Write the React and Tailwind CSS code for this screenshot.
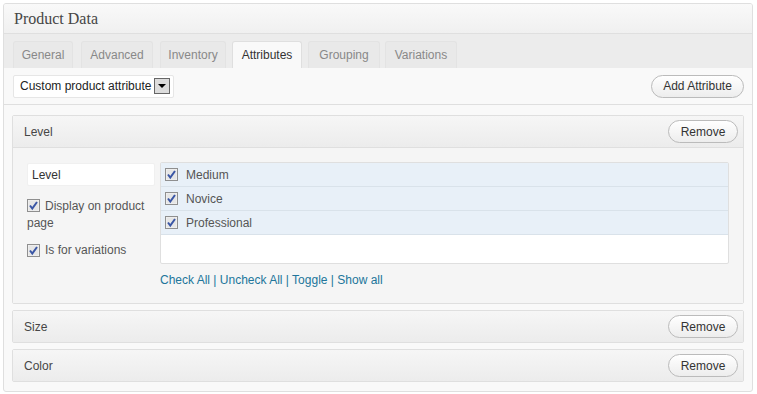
import React from "react";

// [label, width, left gap] measured from the tab strip
const tabs = [
  ["General", "w-[60px]", "ml-0"],
  ["Advanced", "w-[72px]", "ml-[8px]"],
  ["Inventory", "w-[66px]", "ml-[7px]"],
  ["Attributes", "w-[70px]", "ml-[6px]"],
  ["Grouping", "w-[72px]", "ml-[6px]"],
  ["Variations", "w-[72px]", "ml-[5px]"],
];
const terms = ["Medium", "Novice", "Professional"];

function Check({ className = "" }) {
  return (
    <svg width="13" height="13" viewBox="0 0 13 13" aria-hidden="true" className={"shrink-0 " + className}>
      <rect x="0.5" y="0.5" width="12" height="12" fill="#f4f4f4" stroke="#8f8f8f" />
      <rect x="1.5" y="1.5" width="10" height="10" fill="#e6e6e6" />
      <path d="M3 6.5 L5.3 9.5 L10 3" fill="none" stroke="#3a56a5" strokeWidth="2" />
    </svg>
  );
}

function PillButton({ children, className = "" }) {
  return (
    <button
      type="button"
      className={
        "h-[23px] rounded-full border border-[#bbb] bg-gradient-to-b from-white to-[#ededed] px-[11px] text-[12px] text-[#333] " +
        className
      }
    >
      {children}
    </button>
  );
}

function PanelHeader({ title }) {
  return (
    <div className="flex h-[31px] items-center justify-between bg-gradient-to-b from-[#f6f6f6] to-[#ececec] pl-[11px] pr-[5px]">
      <span className="text-[12px] text-[#464646]">{title}</span>
      <PillButton className="w-[70px]">Remove</PillButton>
    </div>
  );
}

export default function App() {
  return (
    <div className="min-h-screen bg-white p-[3px] font-['Liberation_Sans',Arial,sans-serif]">
      <div className="w-[750px] overflow-hidden rounded-[3px] border border-[#dfdfdf] bg-[#f9f9f9]">
        <div className="flex h-[30px] items-center border-b border-[#dfdfdf] bg-gradient-to-b from-[#f9f9f9] to-[#f0f0f0] px-[10px] font-['Liberation_Serif',Georgia,serif] text-[16px] text-[#464646]">
          Product Data
        </div>

        <div className="flex h-[34px] items-end bg-[#ececec] pl-[9px]">
          {tabs.map(([t, w, ml]) => (
            <div
              key={t}
              className={
                "flex h-[27px] items-center justify-center rounded-t-[3px] border border-b-0 text-[12px] " +
                w +
                " " +
                ml +
                " " +
                (t === "Attributes"
                  ? "border-[#dfdfdf] bg-[#f9f9f9] text-[#333]"
                  : "border-[#e3e3e3] bg-[#e9e9e9] text-[#888]")
              }
            >
              {t}
            </div>
          ))}
        </div>

        <div className="flex h-[37px] items-center justify-between border-b border-[#dfdfdf] pl-[9px] pr-[8px]">
          <div className="flex h-[23px] w-[161px] items-center justify-between rounded-[2px] border border-[#e6e6e6] bg-white pl-[6px] pr-[3px] text-[12px] text-[#222]">
            <span className="whitespace-nowrap">Custom product attribute</span>
            <span className="flex h-[16px] w-[16px] shrink-0 items-center justify-center border border-[#666] bg-[#dcdcdc]">
              <span className="h-0 w-0 border-x-[4px] border-t-[4px] border-x-transparent border-t-black" />
            </span>
          </div>
          <PillButton className="w-[93px]">Add Attribute</PillButton>
        </div>

        <div className="flex flex-col gap-[6px] px-[8px] pb-[9px] pt-[10px]">
          <div className="rounded-[2px] border border-[#dfdfdf]">
            <div className="border-b border-[#dfdfdf]">
              <PanelHeader title="Level" />
            </div>
            <div className="bg-[#f5f5f5] px-[14px] pb-[14px] pt-[15px]">
              <div className="flex gap-[5px]">
                <div className="w-[128px] text-[12px] text-[#555]">
                  <div className="flex h-[23px] items-center rounded-[2px] border border-[#f0f0f0] bg-white px-[4px] text-[#333]">
                    Level
                  </div>
                  <div className="mt-[12px] leading-[17px]">
                    <Check className="mr-[5px] inline-block align-[-2px]" />
                    Display on product page
                  </div>
                  <div className="mt-[9px] flex items-center gap-[5px]">
                    <Check />
                    <span>Is for variations</span>
                  </div>
                </div>
                <div className="flex-1">
                  <div className="mt-[-1px] h-[102px] rounded-[2px] border border-[#dfdfdf] bg-white">
                    {terms.map((t) => (
                      <div
                        key={t}
                        className="flex h-[24px] items-center gap-[8px] border-b border-[#d9e2ea] bg-[#e8f0f8] pl-[4px] text-[12px] text-[#555]"
                      >
                        <Check />
                        <span>{t}</span>
                      </div>
                    ))}
                  </div>
                  <div className="mt-[7px] text-[12px] text-[#21759b]">
                    <span>Check All</span> | <span>Uncheck All</span> | <span>Toggle</span> | <span>Show all</span>
                  </div>
                </div>
              </div>
            </div>
          </div>

          <div className="rounded-[2px] border border-[#dfdfdf]">
            <PanelHeader title="Size" />
          </div>
          <div className="rounded-[2px] border border-[#dfdfdf]">
            <PanelHeader title="Color" />
          </div>
        </div>
      </div>
    </div>
  );
}
